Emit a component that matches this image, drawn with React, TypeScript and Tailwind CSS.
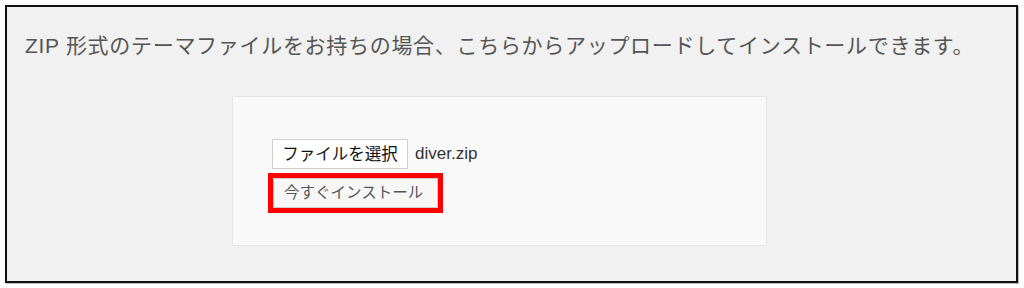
export default function App() {
  return (
    <div className="w-[1024px] h-[288px] bg-white pt-[5px] pl-[5px] font-['Liberation_Sans','Noto_Sans_CJK_JP',sans-serif]">
      <div className="w-[1013px] h-[278px] border-2 border-[#111] bg-[#f1f1f1] shadow-[1px_1px_0_#bbb]">
        <p className="pl-[18px] pt-[24px] text-[21px] leading-[30px] tracking-[0.7px] text-[#555] whitespace-nowrap">
          ZIP 形式のテーマファイルをお持ちの場合、こちらからアップロードしてインストールできます。
        </p>
        <div className="ml-[225px] mt-[35px] w-[535px] h-[150px] border border-[#e5e5e5] bg-[#f9f9f9] pl-[39px] pt-[42px]">
          <div className="flex items-center gap-[7px]">
            <button className="h-[30px] w-[136px] border border-[#cfcfcf] bg-white text-[16.5px] text-[#111]">
              ファイルを選択
            </button>
            <span className="text-[17px] text-[#333]">diver.zip</span>
          </div>
          <div className="mt-[4px] -ml-[4px] w-[175px] h-[40px] border-[5px] border-[#f00]">
            <button className="w-full h-full border border-[#ccc] bg-[#f7f7f7] text-[15.5px] text-[#555] text-left pl-[10px]">
              今すぐインストール
            </button>
          </div>
        </div>
      </div>
    </div>
  )
}
